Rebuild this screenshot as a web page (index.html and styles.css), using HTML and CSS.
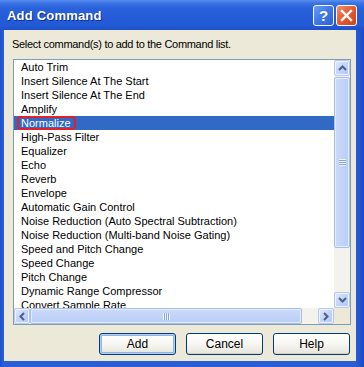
FILE: index.html
```html
<!DOCTYPE html>
<html>
<head>
<meta charset="utf-8">
<link rel="stylesheet" href="styles.css">
</head>
<body>
<div class="window">
  <div class="titlebar">
    <span class="title">Add Command</span>
    <div class="caption-buttons">
      <span class="cbtn help">?</span>
      <span class="cbtn close"><svg width="13" height="13" viewBox="0 0 13 13"><path d="M2 2 L11 11 M11 2 L2 11" stroke="#fff" stroke-width="2.4" stroke-linecap="square"/></svg></span>
    </div>
  </div>
  <div class="client">
    <div class="label">Select command(s) to add to the Command list.</div>
    <div class="listbox">
      <ul class="items">
        <li>Auto Trim</li>
        <li>Insert Silence At The Start</li>
        <li>Insert Silence At The End</li>
        <li>Amplify</li>
        <li class="selected"><span class="marked">Normalize</span></li>
        <li>High-Pass Filter</li>
        <li>Equalizer</li>
        <li>Echo</li>
        <li>Reverb</li>
        <li>Envelope</li>
        <li>Automatic Gain Control</li>
        <li>Noise Reduction (Auto Spectral Subtraction)</li>
        <li>Noise Reduction (Multi-band Noise Gating)</li>
        <li>Speed and Pitch Change</li>
        <li>Speed Change</li>
        <li>Pitch Change</li>
        <li>Dynamic Range Compressor</li>
        <li>Convert Sample Rate</li>
      </ul>
      <div class="vscroll">
        <span class="sbtn"><svg width="9" height="6" viewBox="0 0 9 6"><path d="M1 5 L4.5 1.5 L8 5" fill="none" stroke="#4D6185" stroke-width="2"/></svg></span>
        <span class="thumb vthumb"><span class="grip"></span></span>
        <span class="track"></span>
        <span class="sbtn"><svg width="9" height="6" viewBox="0 0 9 6"><path d="M1 1 L4.5 4.5 L8 1" fill="none" stroke="#4D6185" stroke-width="2"/></svg></span>
      </div>
      <div class="hscroll">
        <span class="sbtn"><svg width="6" height="9" viewBox="0 0 6 9"><path d="M5 1 L1.5 4.5 L5 8" fill="none" stroke="#4D6185" stroke-width="2"/></svg></span>
        <span class="thumb hthumb"><span class="grip"></span></span>
        <span class="track"></span>
        <span class="sbtn"><svg width="6" height="9" viewBox="0 0 6 9"><path d="M1 1 L4.5 4.5 L1 8" fill="none" stroke="#4D6185" stroke-width="2"/></svg></span>
      </div>
      <div class="corner"></div>
    </div>
    <div class="buttons">
      <button class="btn default">Add</button>
      <button class="btn">Cancel</button>
      <button class="btn">Help</button>
    </div>
  </div>
</div>
</body>
</html>
```

FILE: styles.css
```css
html, body {
  margin: 0;
  padding: 0;
  background: #1f52cc;
}
.window {
  width: 364px;
  height: 367px;
  display: flex;
  flex-direction: column;
  background: linear-gradient(to right, #1c4fcb 0, #2a5ed6 3px, #2a5ed6 355px, #1b4ac4 364px);
  font-family: "Liberation Sans", Arial, sans-serif;
  overflow: hidden;
}
.titlebar {
  height: 30px;
  flex: none;
  display: flex;
  align-items: center;
  justify-content: space-between;
  padding: 0 7px 0 7px;
  background: linear-gradient(to bottom, #5a8ff0 0, #3b74e4 3px, #2a62dc 8px, #245bd6 18px, #2259d4 26px, #1d50c9 30px);
}
.title {
  color: #fff;
  font-weight: bold;
  font-size: 13px;
  letter-spacing: 0.2px;
  text-shadow: 1px 1px 0 #0f2f8a;
  margin-top: 1px;
}
.caption-buttons {
  display: flex;
  gap: 2px;
}
.cbtn {
  width: 19px;
  height: 19px;
  border: 1px solid #fff;
  border-radius: 3px;
  display: flex;
  align-items: center;
  justify-content: center;
  color: #fff;
  font-weight: bold;
  font-size: 15px;
}
.help {
  background: linear-gradient(135deg, #6c9df5 0%, #3f77e6 50%, #2c63d8 100%);
}
.close {
  background: linear-gradient(135deg, #f0906c 0%, #e4592e 50%, #cf4518 100%);
}
.client {
  flex: 1;
  margin: 0 8px 6px 4px;
  background: #ece9d8;
  display: flex;
  flex-direction: column;
  padding: 7px 5px 6px 9px;
}
.label {
  font-size: 11px;
  letter-spacing: -0.3px;
  line-height: 14px;
  height: 14px;
  color: #000;
  margin-left: -1px;
}
.listbox {
  margin-top: 8px;
  height: 264px;
  border: 1px solid #7f9db9;
  background: #fff;
  display: grid;
  grid-template-columns: 1fr 16px;
  grid-template-rows: 1fr 16px;
  overflow: hidden;
}
.items {
  list-style: none;
  margin: 0;
  padding: 0;
  overflow: hidden;
  font-size: 11px;
  min-height: 0;
}
.items li {
  height: 14px;
  line-height: 14px;
  padding-left: 7px;
  white-space: nowrap;
  color: #000;
}
.items li.selected {
  background: #316ac5;
  color: #fff;
}
.marked {
  position: relative;
}
.marked::after {
  content: "";
  position: absolute;
  left: -4px;
  right: -5px;
  top: -1px;
  bottom: -1px;
  border: 2.5px solid #e3202a;
  border-radius: 4px;
}
.vscroll {
  display: flex;
  flex-direction: column;
  background: #f3f2ec;
  min-height: 0;
}
.hscroll {
  display: flex;
  background: #f3f2ec;
}
.corner {
  background: #ece9d8;
}
.sbtn {
  width: 16px;
  height: 16px;
  flex: none;
  box-sizing: border-box;
  border: 1px solid #b6c9f2;
  border-radius: 2px;
  background: linear-gradient(135deg, #e2eafd 0%, #c5d5fa 45%, #b4c8f4 100%);
  display: flex;
  align-items: center;
  justify-content: center;
  box-shadow: inset 0 0 0 1px #eef3fd;
}
.thumb {
  box-sizing: border-box;
  border: 1px solid #a8bde9;
  border-radius: 2px;
  background: #c3d3f7;
  box-shadow: inset 0 0 0 1px #e4ecfc;
  display: flex;
  align-items: center;
  justify-content: center;
  flex: none;
}
.vthumb {
  height: 171px;
  margin-top: 1px;
  background: linear-gradient(to right, #cbdafa, #b9cdf6);
}
.hthumb {
  width: 272px;
  background: linear-gradient(to bottom, #cbdafa, #b9cdf6);
}
.track {
  flex: 1;
}
.vthumb .grip {
  width: 7px;
  height: 7px;
  background: repeating-linear-gradient(to bottom, #eef3fd 0, #eef3fd 1px, #8ca5d8 1px, #8ca5d8 2px);
}
.hthumb .grip {
  width: 7px;
  height: 7px;
  background: repeating-linear-gradient(to right, #eef3fd 0, #eef3fd 1px, #8ca5d8 1px, #8ca5d8 2px);
}
.buttons {
  margin-top: 8px;
  display: flex;
  justify-content: flex-end;
  gap: 10px;
  padding-right: 1px;
}
.btn {
  width: 77px;
  height: 22px;
  box-sizing: border-box;
  border: 1px solid #003c74;
  border-radius: 3px;
  background: linear-gradient(to bottom, #ffffff 0%, #f6f6f2 50%, #e6e4da 100%);
  font-family: "Liberation Sans", Arial, sans-serif;
  font-size: 12px;
  color: #000;
  padding: 0;
  box-shadow: inset 0 -1px 0 #d6d0c5;
}
.btn.default {
  box-shadow: inset 0 0 0 1px #b5cdf4, inset 0 0 0 2px #8fb3ec;
}
```
